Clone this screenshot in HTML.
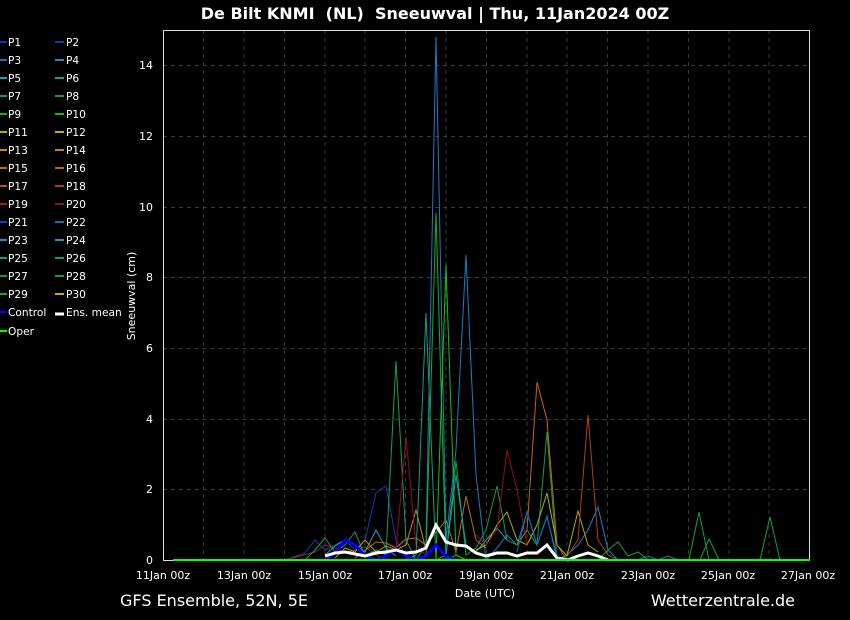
<!DOCTYPE html>
<html><head><meta charset="utf-8"><style>
html,body{margin:0;padding:0;background:#000;width:850px;height:620px;overflow:hidden}
svg{display:block;font-family:"DejaVu Sans","Liberation Sans",sans-serif}
</style></head><body>
<svg width="850" height="620" viewBox="0 0 850 620" xmlns="http://www.w3.org/2000/svg">
<rect width="850" height="620" fill="#000"/>
<text x="435" y="19" fill="#fff" font-size="16" font-weight="bold" text-anchor="middle">De Bilt KNMI &#160;(NL) &#160;Sneeuwval | Thu, 11Jan2024 00Z</text>
<g stroke="#3a3a3a" stroke-width="1" stroke-dasharray="4,4" fill="none">
<path d="M203.5 30V560M244 30V560M284.5 30V560M325 30V560M365 30V560M405.5 30V560M446 30V560M486.5 30V560M527 30V560M567 30V560M607.5 30V560M648 30V560M688.5 30V560M729 30V560M769 30V560"/>
<path d="M163 65.5H810M163 136.5H810M163 207.5H810M163 277.5H810M163 348.5H810M163 419.5H810M163 489.5H810"/>
</g>
<rect x="163.5" y="30.5" width="646" height="530" fill="none" stroke="#ddd" stroke-width="1"/>
<g fill="#fff" font-size="11" text-anchor="end">
<text x="153" y="69">14</text><text x="153" y="140">12</text><text x="153" y="211">10</text>
<text x="153" y="281">8</text><text x="153" y="352">6</text><text x="153" y="423">4</text>
<text x="153" y="493">2</text><text x="153" y="564">0</text>
</g>
<g fill="#fff" font-size="11" text-anchor="middle">
<text x="163" y="579">11Jan 00z</text><text x="244" y="579">13Jan 00z</text><text x="325" y="579">15Jan 00z</text>
<text x="405" y="579">17Jan 00z</text><text x="486" y="579">19Jan 00z</text><text x="567" y="579">21Jan 00z</text>
<text x="648" y="579">23Jan 00z</text><text x="728" y="579">25Jan 00z</text><text x="808" y="579">27Jan 00z</text>
<text x="485" y="597">Date (UTC)</text>
</g>
<text transform="translate(135,296) rotate(-90)" fill="#fff" font-size="11" text-anchor="middle">Sneeuwval (cm)</text>
<text x="120" y="606" fill="#fff" font-size="16">GFS Ensemble, 52N, 5E</text>
<text x="795" y="606" fill="#fff" font-size="16" text-anchor="end">Wetterzentrale.de</text>
<g fill="none" stroke-width="1" stroke-linejoin="miter">
<polyline stroke="#1040b0" points="285,560 305,553 315,540 325,550 335,545 345,540 355,550 365,540 376,493 386,486 396,540 406,555 416,560"/>
<polyline stroke="#a02010" points="285,560 315,552 325,545 335,548 345,553 365,547 376,555 386,560"/>
<polyline stroke="#10a060" points="305,560 315,550 325,538 335,552 345,545 355,532 365,556 376,550 386,555 396,361 406,540 416,560"/>
<polyline stroke="#19a0c0" points="325,555 335,546 345,540 355,545 365,552 376,530 386,548 396,556"/>
<polyline stroke="#c09000" points="335,558 345,548 355,552 365,540 376,552 386,546 396,550 406,545 416,510 426,550"/>
<polyline stroke="#c07000" points="355,558 376,542 386,543 396,548 406,539 416,538 426,545 446,520 456,552 466,496 476,540 486,548"/>
<polyline stroke="#901010" points="386,555 396,550 406,437 416,545 426,556"/>
<polyline stroke="#10a080" points="406,560 416,555 426,313 436,560 446,555"/>
<polyline stroke="#1a7cc8" points="416,560 426,545 436,37 446,540 456,450 466,255 476,475 486,560 497,548 507,535 517,545 527,512 537,545 547,516 557,560 567,555 578,545 588,530 598,507 608,550 618,560 638,560 648,556 658,560 668,556 678,560"/>
<polyline stroke="#10b020" points="416,560 426,555 436,213 446,560 456,555"/>
<polyline stroke="#18c018" points="436,560 446,265 456,555 466,560"/>
<polyline stroke="#10a040" points="446,555 456,461 466,555 476,548 486,530 497,486 507,540 517,545 527,530 537,545 547,432 557,560"/>
<polyline stroke="#10a0b0" points="446,555 456,475 466,545 476,552 486,540 497,528 507,540"/>
<polyline stroke="#b0b000" points="476,550 486,545 497,525 507,512 517,540 527,545 537,525 547,493 557,545 567,556 578,511 588,545 598,552"/>
<polyline stroke="#901010" points="476,535 486,545 497,530 507,450 517,490 527,545"/>
<polyline stroke="#c06800" points="517,545 527,530 537,382 547,420 557,545 567,560"/>
<polyline stroke="#b04010" points="568,555 578,540 588,415 598,540 608,555 618,560"/>
<polyline stroke="#10a040" points="598,560 608,550 618,542 628,556 638,552 648,560"/>
<polyline stroke="#10a040" points="689,560 699,512 709,560"/>
<polyline stroke="#10a040" points="700,560 709,539 719,560"/>
<polyline stroke="#10a040" points="760,560 770,517 780,560"/>
<polyline stroke="#1070c0" points="517,552 527,512 537,545 547,517 557,556"/>
</g>
<polyline fill="none" stroke="#0000ff" stroke-width="3" points="325,560 335,553 345,540 355,545 365,556 376,560 386,556 396,549 406,556 416,560 426,556 436,545 446,556 456,560"/>
<polyline fill="none" stroke="#fff" stroke-width="3" points="325,556 335,553 345,552 355,554 365,556 376,553 386,552 396,550 406,553 416,552 426,548 436,525 446,542 456,545 466,546 476,553 486,556 497,553 507,553 517,556 527,553 537,553 547,545 557,558 568,560 578,556 588,553 598,556 608,560"/>
<line x1="173" y1="560" x2="810" y2="560" stroke="#00ff00" stroke-width="2"/>
<g font-size="10.6" fill="#fff" stroke-width="2">
<line x1="0" y1="42" x2="7" y2="42" stroke="#1030c0" stroke-width="2"/><text x="8" y="46">P1</text>
<line x1="55" y1="42" x2="64" y2="42" stroke="#1040b0" stroke-width="2"/><text x="66" y="46">P2</text>
<line x1="0" y1="60" x2="7" y2="60" stroke="#1a6fb0" stroke-width="2"/><text x="8" y="64">P3</text>
<line x1="55" y1="60" x2="64" y2="60" stroke="#1a8cc0" stroke-width="2"/><text x="66" y="64">P4</text>
<line x1="0" y1="78" x2="7" y2="78" stroke="#19a0c0" stroke-width="2"/><text x="8" y="82">P5</text>
<line x1="55" y1="78" x2="64" y2="78" stroke="#10a090" stroke-width="2"/><text x="66" y="82">P6</text>
<line x1="0" y1="96" x2="7" y2="96" stroke="#10a060" stroke-width="2"/><text x="8" y="100">P7</text>
<line x1="55" y1="96" x2="64" y2="96" stroke="#10a040" stroke-width="2"/><text x="66" y="100">P8</text>
<line x1="0" y1="114" x2="7" y2="114" stroke="#10b020" stroke-width="2"/><text x="8" y="118">P9</text>
<line x1="55" y1="114" x2="64" y2="114" stroke="#10c010" stroke-width="2"/><text x="66" y="118">P10</text>
<line x1="0" y1="132" x2="7" y2="132" stroke="#b0b000" stroke-width="2"/><text x="8" y="136">P11</text>
<line x1="55" y1="132" x2="64" y2="132" stroke="#c0b000" stroke-width="2"/><text x="66" y="136">P12</text>
<line x1="0" y1="150" x2="7" y2="150" stroke="#c09000" stroke-width="2"/><text x="8" y="154">P13</text>
<line x1="55" y1="150" x2="64" y2="150" stroke="#c08800" stroke-width="2"/><text x="66" y="154">P14</text>
<line x1="0" y1="168" x2="7" y2="168" stroke="#c07000" stroke-width="2"/><text x="8" y="172">P15</text>
<line x1="55" y1="168" x2="64" y2="168" stroke="#c06800" stroke-width="2"/><text x="66" y="172">P16</text>
<line x1="0" y1="186" x2="7" y2="186" stroke="#b05010" stroke-width="2"/><text x="8" y="190">P17</text>
<line x1="55" y1="186" x2="64" y2="186" stroke="#b04010" stroke-width="2"/><text x="66" y="190">P18</text>
<line x1="0" y1="204" x2="7" y2="204" stroke="#a02010" stroke-width="2"/><text x="8" y="208">P19</text>
<line x1="55" y1="204" x2="64" y2="204" stroke="#901010" stroke-width="2"/><text x="66" y="208">P20</text>
<line x1="0" y1="222" x2="7" y2="222" stroke="#1040c0" stroke-width="2"/><text x="8" y="226">P21</text>
<line x1="55" y1="222" x2="64" y2="222" stroke="#1070c0" stroke-width="2"/><text x="66" y="226">P22</text>
<line x1="0" y1="240" x2="7" y2="240" stroke="#1890b8" stroke-width="2"/><text x="8" y="244">P23</text>
<line x1="55" y1="240" x2="64" y2="240" stroke="#10a0b0" stroke-width="2"/><text x="66" y="244">P24</text>
<line x1="0" y1="258" x2="7" y2="258" stroke="#10a080" stroke-width="2"/><text x="8" y="262">P25</text>
<line x1="55" y1="258" x2="64" y2="258" stroke="#10a060" stroke-width="2"/><text x="66" y="262">P26</text>
<line x1="0" y1="276" x2="7" y2="276" stroke="#10a040" stroke-width="2"/><text x="8" y="280">P27</text>
<line x1="55" y1="276" x2="64" y2="276" stroke="#10a030" stroke-width="2"/><text x="66" y="280">P28</text>
<line x1="0" y1="294" x2="7" y2="294" stroke="#10b010" stroke-width="2"/><text x="8" y="298">P29</text>
<line x1="55" y1="294" x2="64" y2="294" stroke="#c0b000" stroke-width="2"/><text x="66" y="298">P30</text>
<line x1="0" y1="312" x2="7" y2="312" stroke="#0000ff" stroke-width="2"/><text x="8" y="316">Control</text>
<line x1="55" y1="314" x2="64" y2="314" stroke="#fff" stroke-width="3"/><text x="66" y="316">Ens. mean</text>
<line x1="0" y1="331" x2="7" y2="331" stroke="#00ff00" stroke-width="2"/><text x="8" y="335">Oper</text>
</g>
</svg>
</body></html>
